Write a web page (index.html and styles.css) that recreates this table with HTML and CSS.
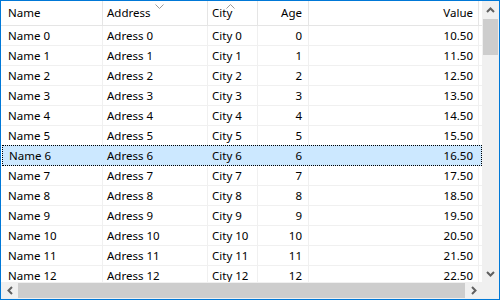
FILE: index.html
```html
<!DOCTYPE html>
<html>
<head>
<meta charset="utf-8">
<link rel="stylesheet" href="styles.css">
</head>
<body>
<div class="window">
  <div class="view">
    <div class="row header">
      <div class="cell c-name">Name</div>
      <div class="cell c-addr">Address<svg class="sort sort-addr" width="9" height="5" viewBox="0 0 9 5"><path d="M0.5 0.5 L4.5 4.5 L8.5 0.5" fill="none" stroke="#9a9a9a" stroke-width="1"/></svg></div>
      <div class="cell c-city">City<svg class="sort sort-city" width="9" height="5" viewBox="0 0 9 5"><path d="M0.5 4.5 L4.5 0.5 L8.5 4.5" fill="none" stroke="#9a9a9a" stroke-width="1"/></svg></div>
      <div class="cell c-age right">Age</div>
      <div class="cell c-val right">Value</div>
      <div class="cell c-rest"></div>
    </div>
    <div class="row"><div class="cell c-name">Name 0</div><div class="cell c-addr">Adress 0</div><div class="cell c-city">City 0</div><div class="cell c-age right">0</div><div class="cell c-val right">10.50</div><div class="cell c-rest"></div></div>
    <div class="row"><div class="cell c-name">Name 1</div><div class="cell c-addr">Adress 1</div><div class="cell c-city">City 1</div><div class="cell c-age right">1</div><div class="cell c-val right">11.50</div><div class="cell c-rest"></div></div>
    <div class="row"><div class="cell c-name">Name 2</div><div class="cell c-addr">Adress 2</div><div class="cell c-city">City 2</div><div class="cell c-age right">2</div><div class="cell c-val right">12.50</div><div class="cell c-rest"></div></div>
    <div class="row"><div class="cell c-name">Name 3</div><div class="cell c-addr">Adress 3</div><div class="cell c-city">City 3</div><div class="cell c-age right">3</div><div class="cell c-val right">13.50</div><div class="cell c-rest"></div></div>
    <div class="row"><div class="cell c-name">Name 4</div><div class="cell c-addr">Adress 4</div><div class="cell c-city">City 4</div><div class="cell c-age right">4</div><div class="cell c-val right">14.50</div><div class="cell c-rest"></div></div>
    <div class="row"><div class="cell c-name">Name 5</div><div class="cell c-addr">Adress 5</div><div class="cell c-city">City 5</div><div class="cell c-age right">5</div><div class="cell c-val right">15.50</div><div class="cell c-rest"></div></div>
    <div class="row selected"><div class="cell c-name">Name 6</div><div class="cell c-addr">Adress 6</div><div class="cell c-city">City 6</div><div class="cell c-age right">6</div><div class="cell c-val right">16.50</div><div class="cell c-rest"></div></div>
    <div class="row"><div class="cell c-name">Name 7</div><div class="cell c-addr">Adress 7</div><div class="cell c-city">City 7</div><div class="cell c-age right">7</div><div class="cell c-val right">17.50</div><div class="cell c-rest"></div></div>
    <div class="row"><div class="cell c-name">Name 8</div><div class="cell c-addr">Adress 8</div><div class="cell c-city">City 8</div><div class="cell c-age right">8</div><div class="cell c-val right">18.50</div><div class="cell c-rest"></div></div>
    <div class="row"><div class="cell c-name">Name 9</div><div class="cell c-addr">Adress 9</div><div class="cell c-city">City 9</div><div class="cell c-age right">9</div><div class="cell c-val right">19.50</div><div class="cell c-rest"></div></div>
    <div class="row"><div class="cell c-name">Name 10</div><div class="cell c-addr">Adress 10</div><div class="cell c-city">City 10</div><div class="cell c-age right">10</div><div class="cell c-val right">20.50</div><div class="cell c-rest"></div></div>
    <div class="row"><div class="cell c-name">Name 11</div><div class="cell c-addr">Adress 11</div><div class="cell c-city">City 11</div><div class="cell c-age right">11</div><div class="cell c-val right">21.50</div><div class="cell c-rest"></div></div>
    <div class="row"><div class="cell c-name">Name 12</div><div class="cell c-addr">Adress 12</div><div class="cell c-city">City 12</div><div class="cell c-age right">12</div><div class="cell c-val right">22.50</div><div class="cell c-rest"></div></div>
  </div>
  <div class="vscroll">
    <div class="arrow"><svg width="9" height="6" viewBox="0 0 9 6"><path d="M1 5 L4.5 1.5 L8 5" fill="none" stroke="#606060" stroke-width="2"/></svg></div>
    <div class="vtrack"><div class="vthumb"></div></div>
    <div class="arrow"><svg width="9" height="6" viewBox="0 0 9 6"><path d="M1 1 L4.5 4.5 L8 1" fill="none" stroke="#606060" stroke-width="2"/></svg></div>
  </div>
  <div class="hscroll">
    <div class="arrow"><svg width="6" height="9" viewBox="0 0 6 9"><path d="M5 1 L1.5 4.5 L5 8" fill="none" stroke="#606060" stroke-width="2"/></svg></div>
    <div class="htrack"><div class="hthumb"></div></div>
    <div class="arrow"><svg width="6" height="9" viewBox="0 0 6 9"><path d="M1 1 L4.5 4.5 L1 8" fill="none" stroke="#606060" stroke-width="2"/></svg></div>
  </div>
  <div class="corner"></div>
</div>
</body>
</html>
```
FILE: styles.css
```css
html, body {
  margin: 0;
  padding: 0;
  background: #ffffff;
}
.window {
  width: 500px;
  height: 300px;
  box-sizing: border-box;
  border: 1px solid #0078d7;
  display: grid;
  grid-template-columns: 481px 17px;
  grid-template-rows: 281px 17px;
  font-family: "Noto Sans", "Liberation Sans", sans-serif;
  font-size: 11.5px;
  color: #000;
  overflow: hidden;
}
.view {
  background: #fff;
  overflow: hidden;
  min-width: 0;
}
.row {
  display: flex;
  height: 20px;
  box-sizing: border-box;
  border-bottom: 1px solid #f0f0f0;
}
.row.header {
  height: 25px;
  border-bottom: 1px solid #e5e5e5;
}
.cell {
  flex: none;
  box-sizing: border-box;
  border-right: 1px solid #f0f0f0;
  padding: 0 6px 0 6px;
  line-height: 19px;
  white-space: nowrap;
  overflow: hidden;
  position: relative;
}
.header .cell {
  line-height: 24px;
  border-right: 1px solid #e5e5e5;
  overflow: visible;
}
.right { text-align: right; }
.c-name { width: 102px; padding-left: 7px; }
.c-addr { width: 105px; padding-left: 4px; }
.c-city { width: 50px; padding-left: 4px; }
.c-age { width: 51px; padding-right: 6px; }
.c-val { width: 170px; padding-right: 5px; }
.c-rest { flex: 1 1 auto; border-right: none; }
.header .c-rest { border-right: none; }
.sort {
  position: absolute;
  top: 3px;
  display: block;
}
.sort-addr { left: 52px; }
.sort-city { left: 18px; }
.row.selected {
  background: #cce8ff;
  border: 1px dotted #000;
  margin-top: -1px;
  height: 21px;
  margin-left: 1px;
}
.row.selected .cell {
  border-right-color: transparent;
  line-height: 19px;
}
.row.selected .c-name { width: 100px; padding-left: 6px; }
.vscroll {
  background: #f0f0f0;
  display: flex;
  flex-direction: column;
}
.vscroll .arrow {
  height: 17px;
  display: flex;
  align-items: center;
  justify-content: center;
}
.vtrack {
  flex: 1;
  padding: 1px 1px;
}
.vthumb {
  height: 36px;
  background: #cdcdcd;
}
.hscroll {
  background: #f0f0f0;
  display: flex;
}
.hscroll .arrow {
  width: 17px;
  display: flex;
  align-items: center;
  justify-content: center;
}
.htrack {
  flex: 1;
  padding: 1px 0;
}
.hthumb {
  height: 100%;
  background: #cdcdcd;
}
.corner {
  background: #f0f0f0;
}
```
